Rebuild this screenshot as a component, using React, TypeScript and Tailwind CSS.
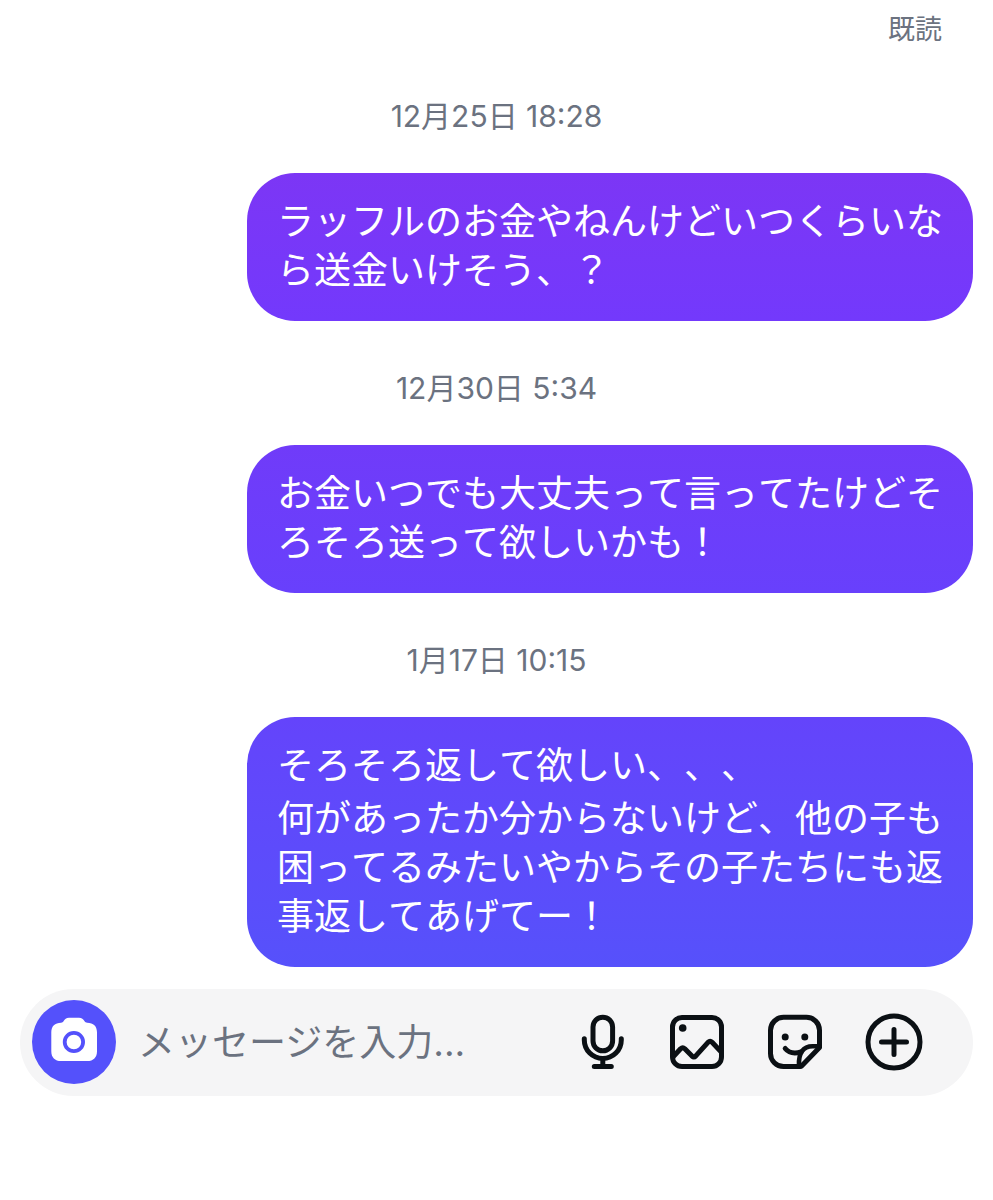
import { Fragment } from "react";

type Message = {
	id: number;
	sentAt: string;
	dateTime: string;
	paragraphs: string[];
	gradient: string;
};

const messages: Message[] = [
	{
		id: 1,
		sentAt: "12月25日 18:28",
		dateTime: "12-25T18:28",
		paragraphs: ["ラッフルのお金やねんけどいつくらいなら送金いけそう、？"],
		gradient: "from-[#7c36f5] to-[#7339fc]",
	},
	{
		id: 2,
		sentAt: "12月30日 5:34",
		dateTime: "12-30T05:34",
		paragraphs: ["お金いつでも大丈夫って言ってたけどそろそろ送って欲しいかも！"],
		gradient: "from-[#703bf9] to-[#6840fc]",
	},
	{
		id: 3,
		sentAt: "1月17日 10:15",
		dateTime: "01-17T10:15",
		paragraphs: [
			"そろそろ返して欲しい、、、",
			"何があったか分からないけど、他の子も困ってるみたいやからその子たちにも返事返してあげてー！",
		],
		gradient: "from-[#6444fb] to-[#5651fb]",
	},
];

function CameraIcon() {
	return (
		<svg viewBox="0 0 50 50" className="size-[50px]" aria-hidden>
			<path
				d="M20 0.8h10c2.8 0 4.3 1.6 5.4 3.3 0.7 1.1 1.5 1.6 2.8 1.6 6.2 0 9.8 3.4 9.8 9.6v18.9c0 6.2-3.6 9.8-9.8 9.8H12.1c-6.2 0-9.8-3.6-9.8-9.8V15.3c0-6.2 3.6-9.6 9.8-9.6 1.2 0 1.9-.5 2.6-1.6 1.1-1.7 2.5-3.3 5.3-3.3z"
				fill="white"
			/>
			<circle cx="24.9" cy="25" r="9.2" fill="none" stroke="#5451fb" strokeWidth="3.8" />
		</svg>
	);
}

function MicIcon() {
	return (
		<svg
			viewBox="0 0 48 56"
			className="h-14 w-12"
			fill="none"
			stroke="currentColor"
			strokeWidth="5"
			strokeLinecap="round"
			aria-hidden
		>
			<rect x="14" y="3.2" width="19.6" height="33.6" rx="9.8" />
			<path d="M5.3 24.7v1.3a18.5 18.5 0 0 0 37 0v-1.3M23.8 44.5v8M15.3 52.5h17" />
		</svg>
	);
}

function ImageIcon() {
	return (
		<svg
			viewBox="0 0 56 56"
			className="size-14"
			fill="none"
			stroke="currentColor"
			strokeWidth="5"
			strokeLinejoin="round"
			aria-hidden
		>
			<rect x="3.5" y="3.5" width="49" height="49" rx="9.5" />
			<circle cx="13.7" cy="14" r="3.8" fill="currentColor" stroke="none" />
			<path d="M3.5 43.5l8.1-8.7q2.1-2 4.2 0l7.2 7.300q1.900 1.700 3.800-.2l12.200-13.600q2.100-2 4.100 0L52.500 38.300" />
		</svg>
	);
}

function StickerIcon() {
	return (
		<svg
			viewBox="0 0 56 56"
			className="size-14"
			fill="none"
			stroke="currentColor"
			strokeWidth="5"
			strokeLinecap="round"
			strokeLinejoin="round"
			aria-hidden
		>
			<path d="M33.2 52.5H16.5a13 13 0 0 1-13-13V16.3a13 13 0 0 1 13-13h23a13 13 0 0 1 13 13V33.6L34.6 51.9a2 2 0 0 1-1.4.6z" />
			<path d="M32 51.5C31.4 39 36 32 46 32.2h6" strokeWidth="4.6" />
			<path d="M18.2 34.500c3.500 4.300 9 5.500 15.800 3.500" />
			<circle cx="18.2" cy="23" r="3.5" fill="currentColor" stroke="none" />
			<circle cx="37.8" cy="23" r="3.5" fill="currentColor" stroke="none" />
		</svg>
	);
}

function PlusIcon() {
	return (
		<svg
			viewBox="0 0 58 58"
			className="size-[58px]"
			fill="none"
			stroke="currentColor"
			strokeWidth="5"
			strokeLinecap="round"
			aria-hidden
		>
			<circle cx="29" cy="29" r="26" />
			<path d="M29 16.5v25M16.5 29h25" />
		</svg>
	);
}

const actions = [
	{ label: "音声", Icon: MicIcon },
	{ label: "写真", Icon: ImageIcon },
	{ label: "スタンプ", Icon: StickerIcon },
	{ label: "その他", Icon: PlusIcon },
];

export default function App() {
	return (
		<main
			lang="ja"
			className="min-h-screen bg-white px-5 font-['Inter','Noto_Sans_CJK_JP',sans-serif] [text-spacing-trim:space-all]"
		>
			<p className="pt-3 pr-[31px] text-right text-[27px] leading-9 text-[#6b7280]">
				既読
			</p>
			<div className="flex flex-col pt-px">
				{messages.map((message) => (
					<Fragment key={message.id}>
						<time
							dateTime={message.dateTime}
							className="pt-[47px] pb-[37px] text-center text-[30px] leading-10 text-[#6b7280]"
						>
							{message.sentAt}
						</time>
						<div
							className={`flex max-w-[726px] flex-col gap-1 self-end rounded-[48px] bg-linear-to-b px-[30px] pt-6 pb-[26px] text-[37px] leading-[49px] text-white [font-kerning:none] ${message.gradient}`}
						>
							{message.paragraphs.map((text) => (
								<p key={text}>{text}</p>
							))}
						</div>
					</Fragment>
				))}
			</div>
			{/* Composer */}
			<form
				className="mt-[22px] flex items-center rounded-full bg-[#f5f5f6] pt-[11px] pr-[50px] pb-3 pl-3"
				onSubmit={(e) => e.preventDefault()}
			>
				<button
					type="button"
					aria-label="カメラ"
					className="flex size-[84px] shrink-0 items-center justify-center rounded-full bg-[#5451fb]"
				>
					<CameraIcon />
				</button>
				<input
					type="text"
					aria-label="メッセージ"
					placeholder="メッセージを入力..."
					className="ml-[22px] h-14 min-w-0 flex-1 bg-transparent text-[37px] text-[#0d1117] outline-none placeholder:text-[#6b7280]"
				/>
				<div className="flex shrink-0 items-center gap-[42px] text-[#0b1014]">
					{actions.map(({ label, Icon }) => (
						<button key={label} type="button" aria-label={label}>
							<Icon />
						</button>
					))}
				</div>
			</form>
		</main>
	);
}
